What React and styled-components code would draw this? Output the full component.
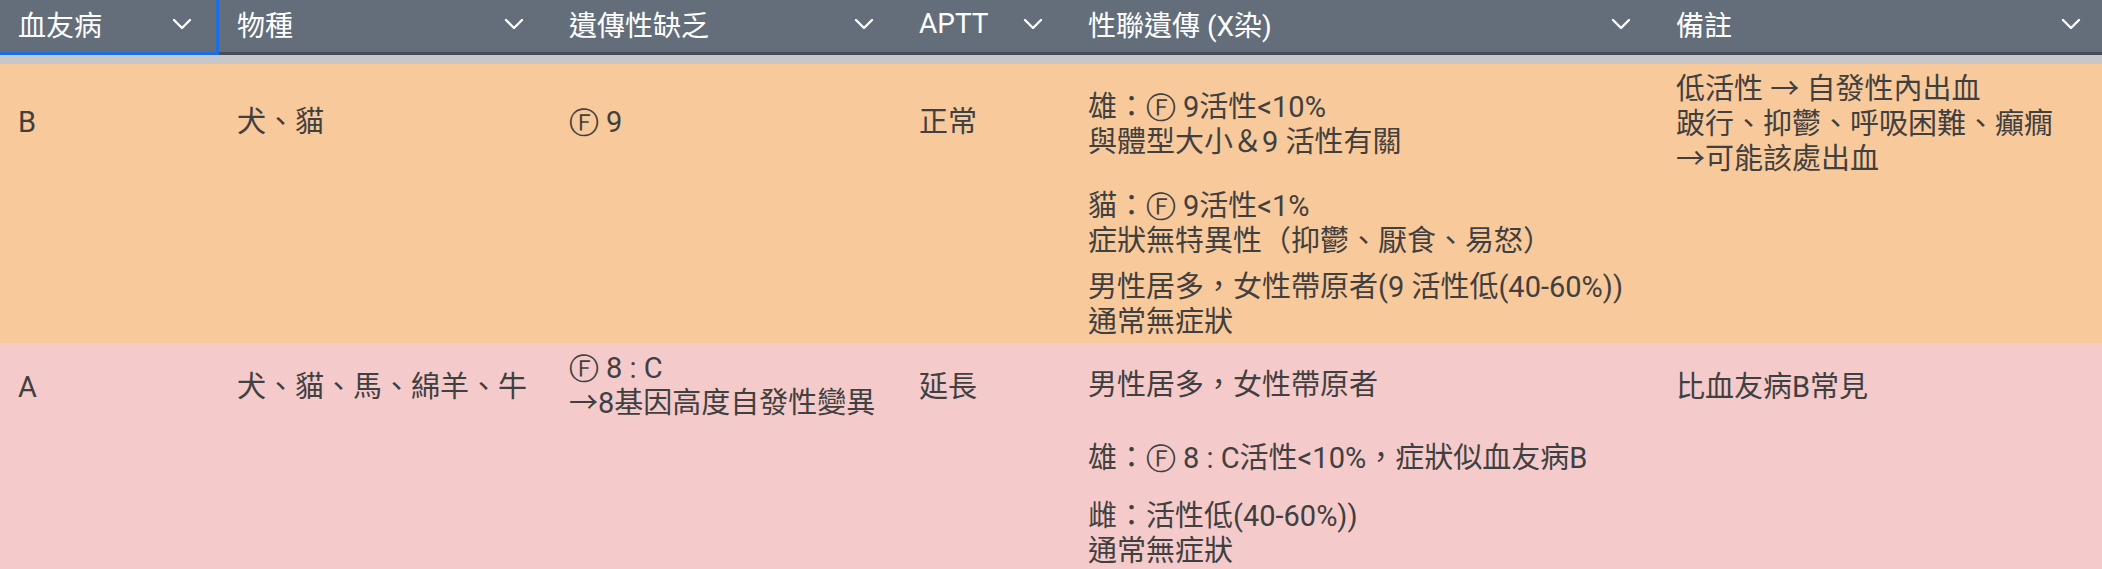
import React from 'react';
import styled, { createGlobalStyle } from 'styled-components';

const COLUMNS = '219px 332px 350px 169px 588px 450px';

const GlobalStyle = createGlobalStyle`
	html, body {
		margin: 0;
		padding: 0;
		background: #f4cacb;
		overflow: hidden;
	}
	body {
		font-family: Roboto, "Noto Sans CJK TC", sans-serif;
	}
`;

const Table = styled.div`
	width: 2108px;
`;

const HeaderRow = styled.div`
	display: grid;
	grid-template-columns: ${COLUMNS};
	background: #636e7a;
`;

const HeaderCell = styled.div`
	box-sizing: border-box;
	height: 55px;
	display: flex;
	align-items: center;
	justify-content: space-between;
	padding: 0 27px 5px 18px;
	border-bottom: 3px solid ${props => props.$active ? '#1c6fe3' : '#474d55'};
	box-shadow: ${props => props.$active ? 'inset -3px 0 0 #1c6fe3' : 'none'};
	color: #fff;
	font-size: 28px;
	white-space: nowrap;
`;

const Chevron = styled.svg`
	flex: none;
	width: 20px;
	height: 12px;
`;

const Band = styled.div`
	height: 9px;
	background: #c7c7c9;
`;

const Row = styled.div`
	display: grid;
	grid-template-columns: ${COLUMNS};
	height: ${props => props.$height}px;
	background: ${props => props.$tone === 'orange' ? '#f8c99b' : '#f4cacb'};
`;

const Cell = styled.div`
	padding: ${props => props.$top}px 10px 0 18px;
	color: #404040;
	font-size: 29px;
	line-height: 35px;
	white-space: nowrap;
`;

const Para = styled.div`
	margin-top: ${props => props.$gap || 0}px;
`;

const Circled = styled.span`
	display: inline-block;
	margin-right: 7px;
	font-family: "DejaVu Sans", sans-serif;
	font-size: 30px;
	line-height: 35px;
	vertical-align: top;
`;

const columns = ['血友病', '物種', '遺傳性缺乏', 'APTT', '性聯遺傳 (X染)', '備註'];

const rows = [
	{
		tone: 'orange',
		height: 279,
		cells: [
			{ top: 41, paras: [{ lines: ['B'] }] },
			{ top: 41, paras: [{ lines: ['犬、貓'] }] },
			{ top: 41, paras: [{ lines: ['Ⓕ9'] }] },
			{ top: 41, paras: [{ lines: ['正常'] }] },
			{
				top: 26,
				paras: [
					{ lines: ['雄：Ⓕ9活性<10%', '與體型大小＆9 活性有關'] },
					{ gap: 29, lines: ['貓：Ⓕ9活性<1%', '症狀無特異性（抑鬱、厭食、易怒）'] },
					{ gap: 11, lines: ['男性居多，女性帶原者(9 活性低(40-60%))', '通常無症狀'] },
				],
			},
			{ top: 8, paras: [{ lines: ['低活性 → 自發性內出血', '跛行、抑鬱、呼吸困難、癲癇', '→可能該處出血'] }] },
		],
	},
	{
		tone: 'pink',
		height: 240,
		cells: [
			{ top: 27, paras: [{ lines: ['A'] }] },
			{ top: 27, paras: [{ lines: ['犬、貓、馬、綿羊、牛'] }] },
			{ top: 8, paras: [{ lines: ['Ⓕ8 : C', '→8基因高度自發性變異'] }] },
			{ top: 27, paras: [{ lines: ['延長'] }] },
			{
				top: 25,
				paras: [
					{ lines: ['男性居多，女性帶原者'] },
					{ gap: 38, lines: ['雄：Ⓕ8 : C活性<10%，症狀似血友病B'] },
					{ gap: 23, lines: ['雌：活性低(40-60%))', '通常無症狀'] },
				],
			},
			{ top: 27, paras: [{ lines: ['比血友病B常見'] }] },
		],
	},
];

// the circled factor mark is drawn larger than the body font, as in the source sheet
const renderLine = line => line.split(/(Ⓕ)/).map((part, i) => (
	part === 'Ⓕ' ? <Circled key={i}>{part}</Circled> : part
));

function App() {
	return (
		<Table>
			<GlobalStyle />
			<HeaderRow>
				{columns.map((name, i) => (
					<HeaderCell key={name} $active={i === 0}>
						<span>{name}</span>
						<Chevron viewBox="0 0 20 12">
							<polyline points="2,2 10,10 18,2" fill="none" stroke="#fff" strokeWidth="2.4" strokeLinecap="round" strokeLinejoin="round" />
						</Chevron>
					</HeaderCell>
				))}
			</HeaderRow>
			<Band />
			{rows.map((row, r) => (
				<Row key={r} $tone={row.tone} $height={row.height}>
					{row.cells.map((cell, c) => (
						<Cell key={c} $top={cell.top}>
							{cell.paras.map((para, p) => (
								<Para key={p} $gap={para.gap}>
									{para.lines.map((line, l) => <div key={l}>{renderLine(line)}</div>)}
								</Para>
							))}
						</Cell>
					))}
				</Row>
			))}
		</Table>
	);
}

export default App;
